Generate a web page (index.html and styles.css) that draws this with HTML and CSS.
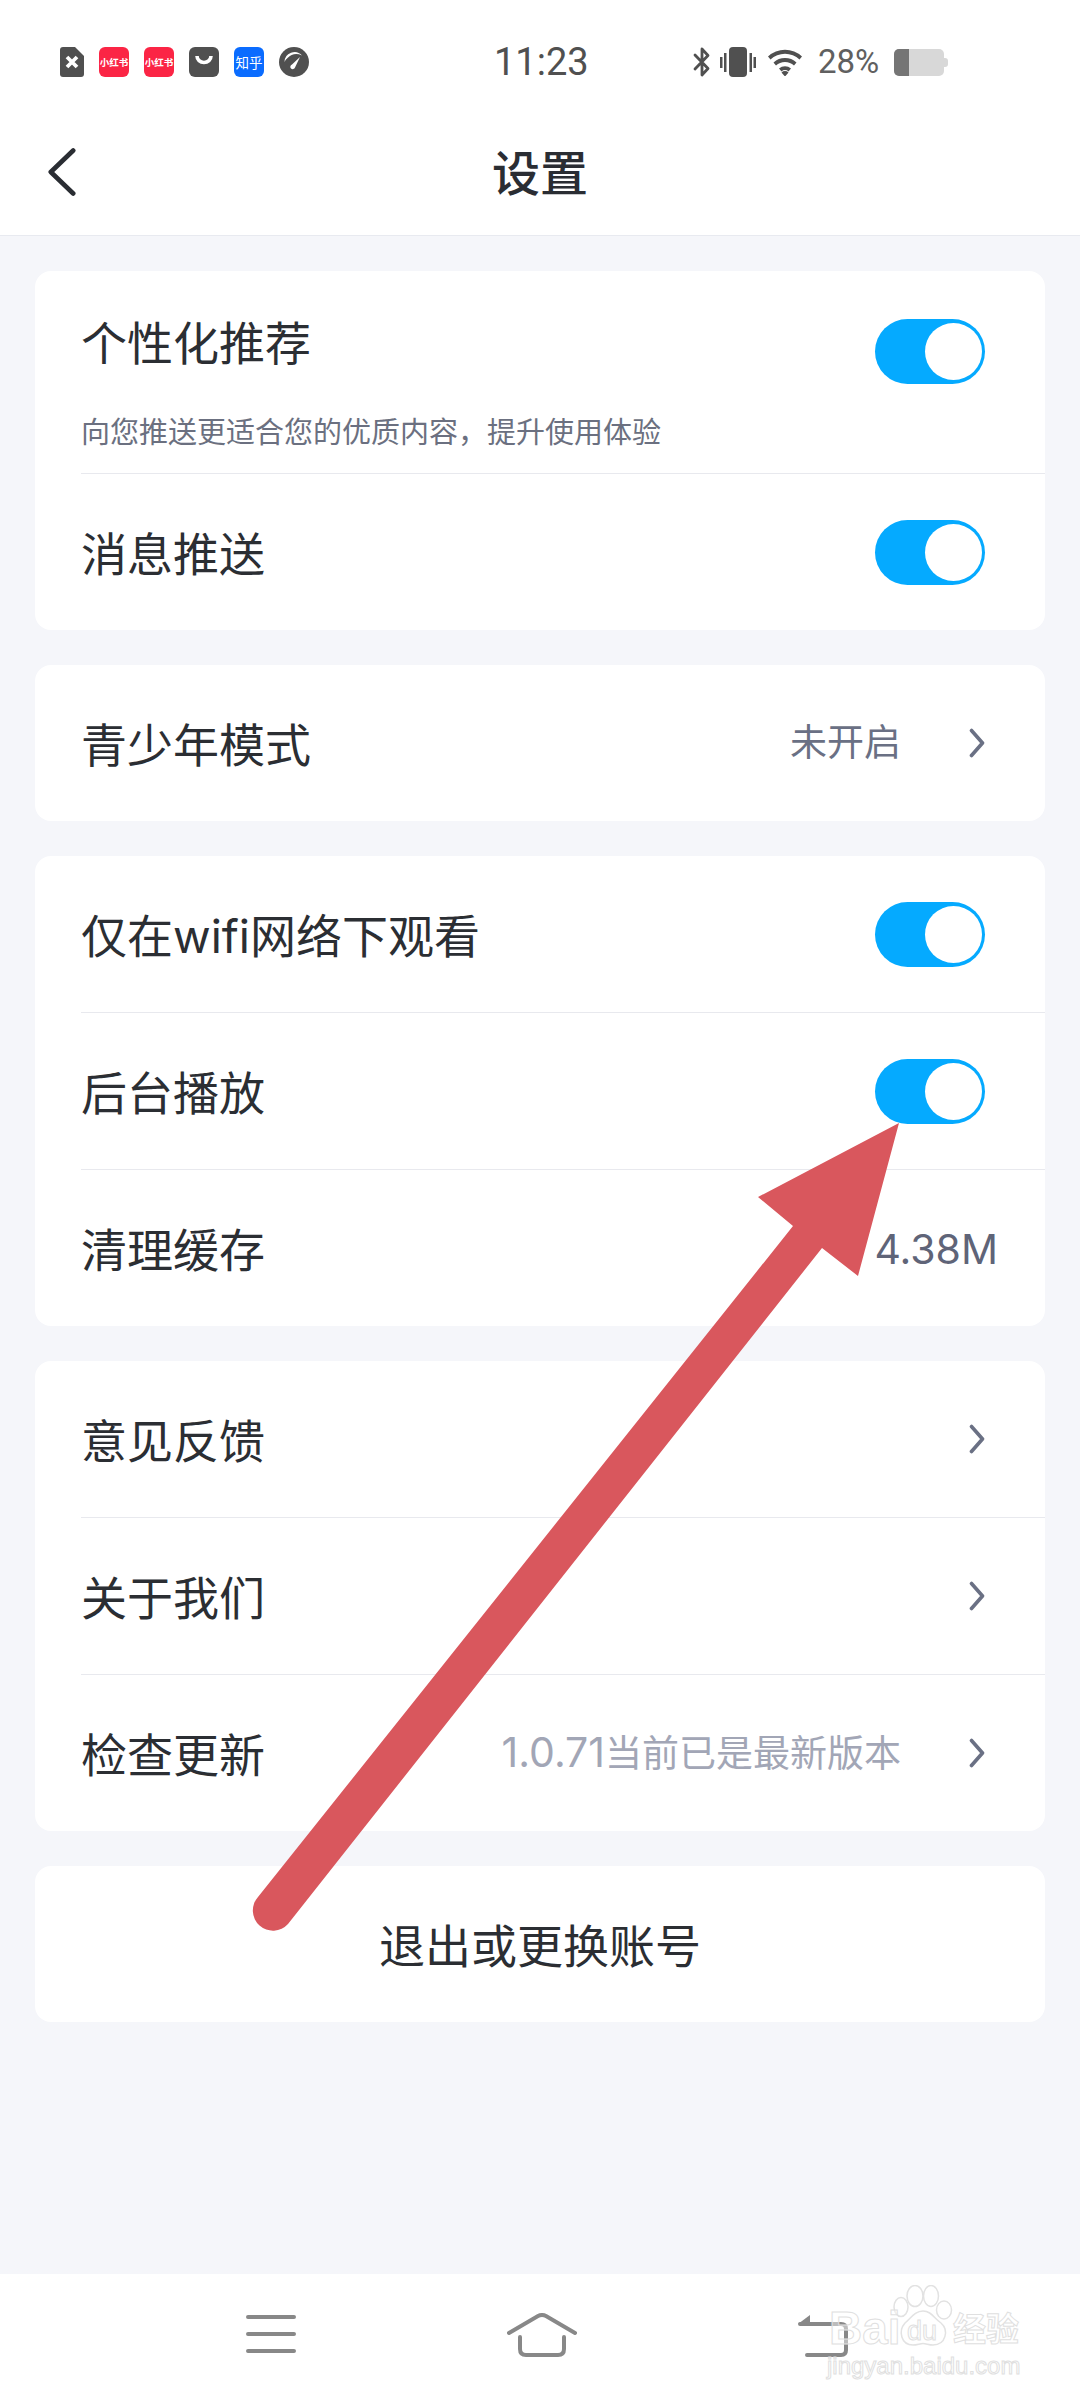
FILE: index.html
```html
<!DOCTYPE html>
<html lang="zh-CN">
<head>
<meta charset="utf-8">
<title>设置</title>
<link rel="stylesheet" href="styles.css">
</head>
<body>
<div class="page">
  <header class="top">
    <div class="status">
      <div class="notifs">
        <svg class="ic-file" viewBox="0 0 24 30"><path d="M3 0h12l9 9v18a3 3 0 0 1-3 3H3a3 3 0 0 1-3-3V3a3 3 0 0 1 3-3z" fill="#505050"/><path d="M7 10l10 10M17 10L7 20" stroke="#fff" stroke-width="3.800" fill="none"/></svg>
        <span class="app app-red"><span class="app-tiny">小红书</span></span>
        <span class="app app-red"><span class="app-tiny">小红书</span></span>
        <svg class="ic-app" viewBox="0 0 30 30"><rect width="30" height="30" rx="6" fill="#505050"/><path d="M8 9a7 6.500 0 0 0 14 0" stroke="#fff" stroke-width="3.600" fill="none"/></svg>
        <span class="app app-blue">知乎</span>
        <svg class="ic-app" viewBox="0 0 30 30"><circle cx="15" cy="15" r="15" fill="#505050"/><path d="M5.500 15A10 10 0 0 1 23 8.500A13 13 0 0 0 8.500 11A9 9 0 0 0 5.500 15z" fill="#fff"/><path d="M21 10L13 17.500a2.400 2.400 0 1 0 3 3z" fill="#fff"/></svg>
      </div>
      <div class="time">11:23</div>
      <div class="sys">
        <svg class="ic-bt" viewBox="0 0 18 30"><path d="M2 8l13 13.500L9 28V2l6 6.500L2 22" stroke="#505050" stroke-width="2.800" fill="none" stroke-linejoin="round" stroke-linecap="round"/></svg>
        <svg class="ic-vib" viewBox="0 0 36 30"><rect x="9" width="18" height="30" rx="4" fill="#505050"/><rect x="0" y="10" width="2.500" height="11" fill="#505050"/><rect x="4" y="6" width="2.500" height="19" fill="#505050"/><rect x="29.500" y="6" width="2.500" height="19" fill="#505050"/><rect x="33.500" y="10" width="2.500" height="11" fill="#505050"/></svg>
        <svg class="ic-wifi" viewBox="0 0 36 28"><path d="M1 8.500a25 25 0 0 1 34 0l-2.500 3a21 21 0 0 0-29 0z M6.500 14.500a17 17 0 0 1 23 0l-2.500 3a13 13 0 0 0-18 0z M12 20.500a9 9 0 0 1 12 0l-2.500 3a5 5 0 0 0-7 0z M14.500 24.500a5 5 0 0 1 7 0L18 28.500z" fill="#505050"/></svg>
        <span class="pct">28%</span>
        <span class="battery"><span class="battery-fill"></span></span>
      </div>
    </div>
    <div class="nav-title">
      <svg class="back" viewBox="0 0 30 52"><path d="M27 3L3 26l24 23" stroke="#2a2d33" stroke-width="5" fill="none" stroke-linecap="round" stroke-linejoin="round"/></svg>
      <h1 class="title">设置</h1>
    </div>
  </header>

  <main class="list">
    <section class="card">
      <div class="row row-tall">
        <div class="tall-main">
          <span class="label">个性化推荐</span>
          <span class="toggle"><span class="knob"></span></span>
        </div>
        <p class="sub">向您推送更适合您的优质内容，提升使用体验</p>
      </div>
      <div class="row"><span class="label">消息推送</span><span class="toggle"><span class="knob"></span></span></div>
    </section>

    <section class="card">
      <div class="row"><span class="label">青少年模式</span><span class="side"><span class="val">未开启</span><svg class="chev" viewBox="0 0 16 30"><path d="M2.500 2.500L13.500 15 2.500 27.500" stroke="#6a7084" stroke-width="3.600" fill="none" stroke-linecap="round" stroke-linejoin="round"/></svg></span></div>
    </section>

    <section class="card">
      <div class="row"><span class="label">仅在wifi网络下观看</span><span class="toggle"><span class="knob"></span></span></div>
      <div class="row"><span class="label">后台播放</span><span class="toggle"><span class="knob"></span></span></div>
      <div class="row row-cache"><span class="label">清理缓存</span><span class="size">4.38M</span></div>
    </section>

    <section class="card">
      <div class="row"><span class="label">意见反馈</span><svg class="chev" viewBox="0 0 16 30"><path d="M2.500 2.500L13.500 15 2.500 27.500" stroke="#6a7084" stroke-width="3.600" fill="none" stroke-linecap="round" stroke-linejoin="round"/></svg></div>
      <div class="row"><span class="label">关于我们</span><svg class="chev" viewBox="0 0 16 30"><path d="M2.500 2.500L13.500 15 2.500 27.500" stroke="#6a7084" stroke-width="3.600" fill="none" stroke-linecap="round" stroke-linejoin="round"/></svg></div>
      <div class="row"><span class="label">检查更新</span><span class="side"><span class="val val-light"><span class="ver">1.0.71</span>当前已是最新版本</span><svg class="chev" viewBox="0 0 16 30"><path d="M2.500 2.500L13.500 15 2.500 27.500" stroke="#6a7084" stroke-width="3.600" fill="none" stroke-linecap="round" stroke-linejoin="round"/></svg></span></div>
    </section>

    <section class="card card-exit">
      <span class="label">退出或更换账号</span>
    </section>
  </main>

  <nav class="bottom">
    <svg class="nav-menu" viewBox="0 0 50 38"><path d="M2 2h46M2 19h46M2 36h46" stroke="#888" stroke-width="4" stroke-linecap="round" fill="none"/></svg>
    <svg class="nav-home" viewBox="0 0 70 44"><path d="M2 20L31 3q4-2 8 0l29 17" stroke="#888" stroke-width="4" stroke-linecap="round" fill="none"/><path d="M13 24v12q0 6 6 6h32q6 0 6-6V24" stroke="#888" stroke-width="4" stroke-linecap="round" fill="none"/></svg>
    <svg class="nav-back" viewBox="0 0 50 42"><path d="M0 9L12 0v9z" fill="#888"/><path d="M2 9h41q5 0 5 5v21q0 5-5 5H9" stroke="#888" stroke-width="4" stroke-linecap="round" fill="none"/></svg>
  </nav>
</div>

<svg class="arrow" viewBox="0 0 1080 2400"><path d="M899 1123L758 1197 793 1226 258 1897A20 20 0 0 0 288 1924L822 1248 858 1276z" fill="#d9575d"/></svg>

<div class="mark">
  <svg class="mark-paw" viewBox="0 0 60 62"><g fill="#fff" fill-opacity=".55" stroke="#e2e2e2" stroke-width="1.500"><ellipse cx="8" cy="22" rx="7" ry="9.500"/><ellipse cx="22" cy="11" rx="8" ry="10.500"/><ellipse cx="38" cy="11" rx="7.500" ry="10.500"/><ellipse cx="51" cy="25" rx="7.500" ry="9"/><path d="M30 26c8 0 11 7 18 12 8 7 5 22-8 22-4 0-7-1.500-10-1.500S24 60 20 60C8 60 5 46 12 38c6-5 10-12 18-12z"/></g></svg>
  <span class="mark-bai">Bai</span>
  <span class="mark-du">du</span>
  <span class="mark-cn">经验</span>
  <span class="mark-url">jingyan.baidu.com</span>
</div>
</body>
</html>
```

FILE: styles.css
```css
* { box-sizing: border-box; }
html, body { margin: 0; padding: 0; }
body {
  width: 1080px;
  height: 2400px;
  overflow: hidden;
  position: relative;
  font-family: Inter, "Noto Sans CJK SC", sans-serif;
  color: #2b2e33;
  background: #f5f6fa;
}
.page { display: flex; flex-direction: column; height: 2400px; }

.top { background: #fff; height: 236px; border-bottom: 1px solid #e8eaf0; flex: none; }
.status { height: 82px; padding: 47px 0 0 60px; display: flex; align-items: flex-start; font-family: Roboto, sans-serif; }
.notifs { display: flex; align-items: center; gap: 15px; width: 434px; flex: none; }
.ic-file { width: 24px; height: 30px; display: block; }
.ic-app { width: 30px; height: 30px; display: block; }
.app {
  width: 30px; height: 30px; border-radius: 6px; color: #fff;
  display: flex; align-items: center; justify-content: center; overflow: hidden;
  font-family: "Noto Sans CJK SC", sans-serif;
  font-size: 13.500px; line-height: 30px; white-space: nowrap;
}
.app-red { background: #fb2545; }
.app-tiny { font-size: 9.500px; font-weight: 700; }
.app-blue { background: #0a6cff; }
.time { font-size: 38px; line-height: 30px; color: #505050; width: 199px; flex: none; }
.sys { display: flex; align-items: center; height: 30px; }
.ic-bt { width: 18px; height: 30px; display: block; }
.ic-vib { width: 36px; height: 30px; margin-left: 9px; display: block; }
.ic-wifi { width: 36px; height: 28px; margin-left: 11px; display: block; }
.pct { font-size: 33px; line-height: 30px; color: #606060; margin-left: 15px; width: 62px; white-space: nowrap; }
.battery {
  width: 50px; height: 27px; margin-left: 14px; border-radius: 5px; background: #d8d8d8;
  position: relative; display: block;
}
.battery::after {
  content: ""; position: absolute; right: -4px; top: 9px; width: 4px; height: 9px;
  background: #d8d8d8; border-radius: 0 3px 3px 0;
}
.battery-fill { display: block; width: 15px; height: 27px; background: #757575; border-radius: 5px 0 0 5px; }

.nav-title { height: 153px; padding-left: 48px; display: flex; align-items: center; }
.back { width: 28px; height: 50px; display: block; margin-top: 26px; }
.title {
  margin: 30px 0 0 416px; font-size: 48px; font-weight: 500; line-height: 60px; color: #2a2d33;
}

.list { flex: 1; padding: 35px 35px 0; display: flex; flex-direction: column; gap: 35px; }
.card { background: #fff; border-radius: 16px; overflow: hidden; }
.row {
  height: 157px; margin-left: 46px; padding-right: 60px;
  display: flex; align-items: center; justify-content: space-between;
  border-top: 1px solid #e8e9ee;
}
.row:first-child { border-top: 0; height: 156px; }
.row-tall { display: block; height: 202px !important; padding-top: 47px; }
.tall-main { display: flex; align-items: center; justify-content: space-between; height: 66px; }
.tall-main .label { position: relative; top: -10px; }
.sub { margin: 29px 0 0; font-size: 29px; line-height: 40px; color: #6b7080; white-space: nowrap; }
.label { font-size: 46px; line-height: 60px; color: #2b2e33; white-space: nowrap; margin-top: 4px; }
.toggle { width: 110px; height: 65px; border-radius: 33px; background: #05aaff; display: block; position: relative; flex: none; }
.knob { position: absolute; right: 3px; top: 4px; width: 57px; height: 57px; border-radius: 50%; background: #fff; }
.side { display: flex; align-items: center; }
.val { font-size: 37px; line-height: 48px; color: #6a7084; white-space: nowrap; margin-right: 68px; }
.val-light { color: #a2a6b6; }
.ver { font-size: 41px; }
.chev { width: 16px; height: 30px; display: block; flex: none; }
.row-cache { padding-right: 47px; }
.size { font-size: 41px; color: #5f6478; margin-top: 2px; }
.card-exit { height: 156px; display: flex; align-items: center; justify-content: center; }

.bottom { height: 126px; background: #fff; flex: none; display: flex; align-items: flex-start; padding: 41px 0 0 246px; }
.nav-menu { width: 50px; height: 38px; display: block; }
.nav-home { width: 70px; height: 44px; display: block; margin: -2px 0 0 211px; }
.nav-back { width: 50px; height: 42px; display: block; margin: 0 0 0 221px; }

.arrow { position: absolute; left: 0; top: 0; width: 1080px; height: 2400px; pointer-events: none; }

.mark { position: absolute; left: 826px; top: 2285px; width: 200px; height: 95px; }
.mark span { position: absolute; color: rgba(255,255,255,.45); -webkit-text-stroke: 1px #e0e0e0; white-space: nowrap; }
.mark-paw { position: absolute; left: 67px; top: 0; width: 60px; height: 62px; }
.mark-bai { left: 3px; top: 21px; font: 700 46px/44px "Liberation Sans", sans-serif; }
.mark-du { left: 81px; top: 32px; font: 400 27px/28px "Liberation Sans", sans-serif; }
.mark-cn { left: 127px; top: 20px; font: 700 33px/44px "Noto Sans CJK SC", sans-serif; }
.mark-url { left: 1px; top: 67px; font: 400 24px/28px "Liberation Sans", sans-serif; }
```
